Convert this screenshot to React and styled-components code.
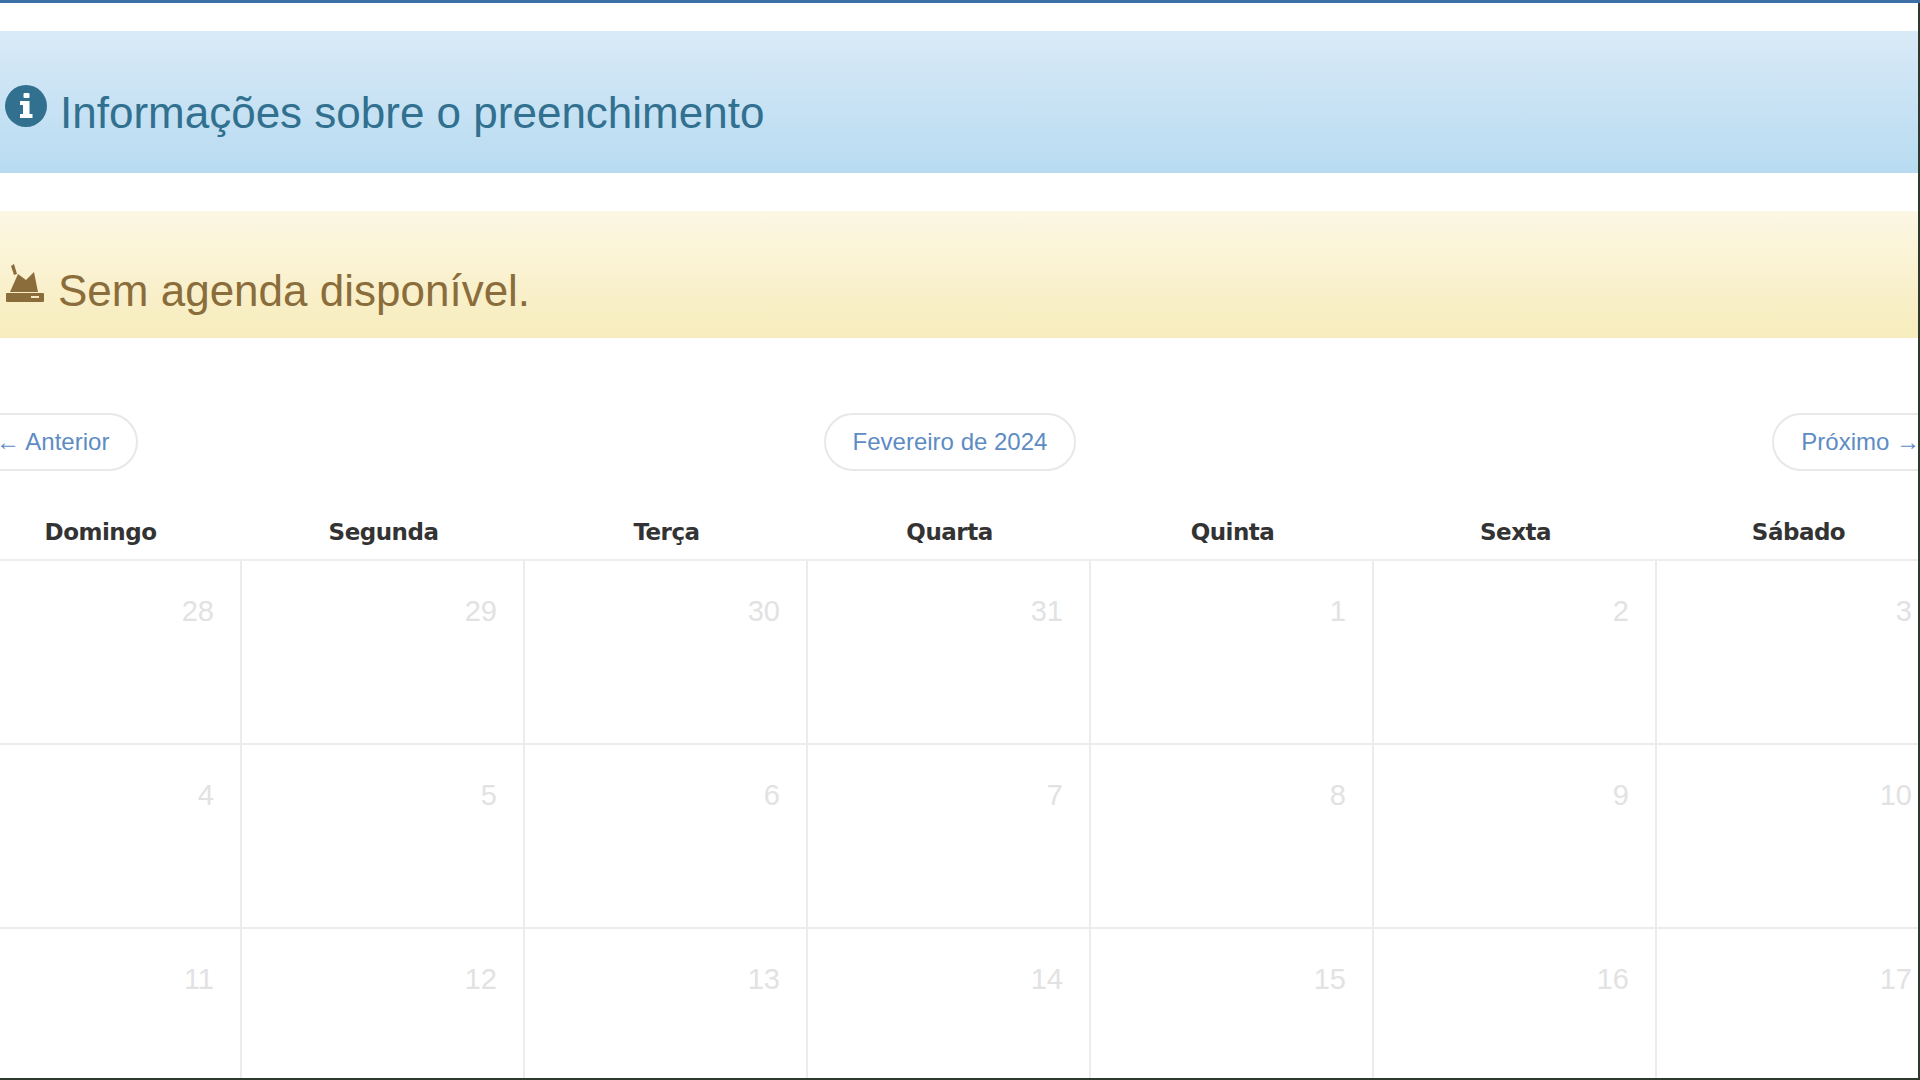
import React from "react";
import styled, { createGlobalStyle } from "styled-components";

const Global = createGlobalStyle`
  html, body { margin: 0; padding: 0; background: #fff; overflow: hidden; }
  body { font-family: "Liberation Sans", Arial, sans-serif; width: 1920px; height: 1080px; }
`;

const Frame = styled.div`
  width: 1920px; height: 1080px; overflow: hidden; position: relative;
  border-top: 3px solid #3c6fa3; box-sizing: border-box;
  &::after { content: ""; position: absolute; right: 0; top: 0; bottom: 0; width: 2px; background: #2d3a2d; }
  &::before { content: ""; position: absolute; left: 0; right: 0; bottom: 0; height: 2px; background: #2d3a2d; z-index: 2; }
`;

const Inner = styled.div`
  margin: 0 -41px; width: 1982px;
`;

const Alert = styled.div`
  display: flex; align-items: center; gap: 12px;
  padding: 0 0 0 45px;
  height: ${p => p.$h}px;
  margin-top: ${p => p.$mt}px;
  background: ${p => p.$bg};
  color: ${p => p.$color};
  font-size: 44px;
`;

const AlertText = styled.span`
  position: relative; top: ${p => p.$dy || 0}px;
`;

const IconBox = styled.span`
  display: flex; position: relative; top: ${p => p.$dy || 0}px;
`;

const Nav = styled.div`
  display: grid; grid-template-columns: 1fr auto 1fr; align-items: center;
  margin-top: 75px;
`;

const PillBtn = styled.button`
  height: 58px; padding: 0 27px; border: 2px solid #e8e8e8; border-radius: 30px;
  background: #fff; color: #5d8cc4; font-family: "Liberation Sans", Arial, sans-serif;
  font-size: 24px; white-space: nowrap;
  justify-self: ${p => p.$align || "center"};
  margin-left: ${p => p.$ml || 0}px;
  margin-right: ${p => p.$mr || 0}px;
`;

const Grid = styled.div`
  display: grid; grid-template-columns: repeat(7, 283px); margin-top: 48px;
`;

const Head = styled.div`
  text-align: center; font-weight: bold; font-size: 23px; color: #333;
  padding-bottom: 14px; border-bottom: 2px solid #eee;
  font-family: "DejaVu Sans", Verdana, sans-serif; letter-spacing: -0.5px;
`;

const Cell = styled.div`
  height: 184px; box-sizing: border-box;
  border-right: 2px solid #ececec; border-bottom: 2px solid #ececec;
  text-align: right; padding: 34px 26px 0 0;
  color: #e2e2e2; font-size: 29px;
`;

const days = ["Domingo", "Segunda", "Terça", "Quarta", "Quinta", "Sexta", "Sábado"];
const nums = [28, 29, 30, 31, 1, 2, 3, 4, 5, 6, 7, 8, 9, 10, 11, 12, 13, 14, 15, 16, 17];

const InfoIcon = () => (
  <svg width="44" height="44" viewBox="0 0 44 44">
    <circle cx="22" cy="22" r="21" fill="#31708f" />
    <rect x="19.5" y="9" width="6" height="5" rx="1" fill="#fff" />
    <path d="M16 17h9.5v13h3v4h-12.5v-4h3v-9h-3z" fill="#fff" />
  </svg>
);

const AgendaIcon = () => (
  <svg width="42" height="42" viewBox="0 0 42 42">
    <path d="M7 4 L10 2 L13 12 L10 13 Z" fill="#8a6d3b" />
    <path d="M14 12 L22 18 L30 10 L34 30 L6 30 Z" fill="#8a6d3b" />
    <rect x="2" y="31" width="38" height="9" rx="1" fill="#8a6d3b" />
    <rect x="27" y="34" width="8" height="2" fill="#f5e9c0" />
  </svg>
);

export default function App() {
  return (
    <Frame>
      <Global />
      <Inner>
        <Alert $mt={28} $h={142} $bg="linear-gradient(#d9eaf7, #b8dbf1)" $color="#31708f">
          <IconBox $dy={4}><InfoIcon /></IconBox>
          <AlertText $dy={11}>Informações sobre o preenchimento</AlertText>
        </Alert>
        <Alert $mt={38} $h={127} $bg="linear-gradient(#fcf7e4, #f7ecbc)" $color="#8a6d3b">
          <IconBox $dy={8}><AgendaIcon /></IconBox>
          <AlertText $dy={16}>Sem agenda disponível.</AlertText>
        </Alert>
        <Nav>
          <PillBtn $align="start" $ml={8}>← Anterior</PillBtn>
          <PillBtn>Fevereiro de 2024</PillBtn>
          <PillBtn $align="end" $mr={-8}>Próximo →</PillBtn>
        </Nav>
        <Grid>
          {days.map(d => <Head key={d}>{d}</Head>)}
          {nums.map((n, i) => <Cell key={i}>{n}</Cell>)}
        </Grid>
      </Inner>
    </Frame>
  );
}
